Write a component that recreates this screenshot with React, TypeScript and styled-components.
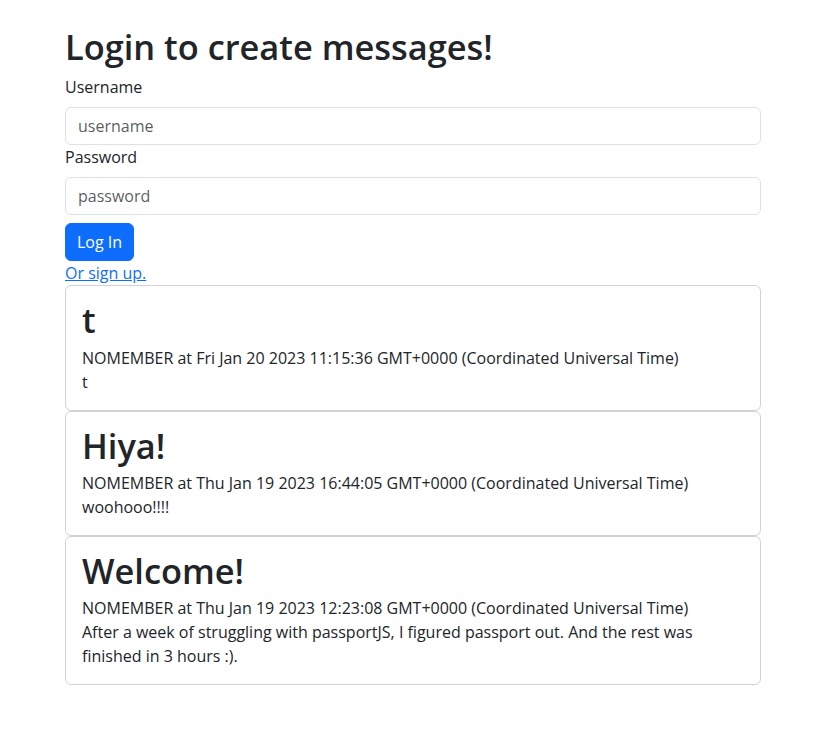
import React from "react";
import styled, { createGlobalStyle } from "styled-components";

const GlobalStyle = createGlobalStyle`
  *, *::before, *::after { box-sizing: border-box; }
  body {
    margin: 0;
    background: #fff;
    color: #212529;
    font-family: "Open Sans", "Noto Sans", sans-serif;
    font-size: 16px;
    line-height: 1.5;
  }
`;

const Container = styled.main`
  width: 696px;
  margin: 0 auto;
  padding-top: 26px;
`;

const PageTitle = styled.h1`
  margin: 0 0 8px;
  font-size: 34.4px;
  font-weight: 600;
  line-height: 1.2;
`;

const Form = styled.form`
  display: flex;
  flex-direction: column;
  align-items: flex-start;
`;

const Label = styled.label`
  display: block;
  margin-bottom: 8px;
`;

const Input = styled.input`
  display: block;
  width: 100%;
  height: 38px;
  padding: 6px 12px;
  font: inherit;
  color: #212529;
  background: #fff;
  border: 1px solid #dee2e6;
  border-radius: 6px;
  &::placeholder { color: rgba(33, 37, 41, 0.75); }
`;

const Button = styled.button`
  margin-top: 8px;
  padding: 6px 11px;
  font: inherit;
  line-height: 1.5;
  color: #fff;
  background: #0d6efd;
  border: 1px solid #0d6efd;
  border-radius: 6px;
  cursor: pointer;
`;

const SignUp = styled.div`
  a { color: #0d6efd; text-decoration: underline; }
`;

const Card = styled.article`
  border: 1px solid rgba(0, 0, 0, 0.175);
  border-radius: 6px;
  padding: 16px;
`;

const CardTitle = styled.h1`
  margin: 0 0 8.28px;
  font-size: 34.4px;
  font-weight: 600;
  line-height: 35px;
`;

const Line = styled.div``;

const messages = [
  { title: "t", date: "Fri Jan 20 2023 11:15:36", body: "t" },
  { title: "Hiya!", date: "Thu Jan 19 2023 16:44:05", body: "woohooo!!!!" },
  {
    title: "Welcome!",
    date: "Thu Jan 19 2023 12:23:08",
    body: "After a week of struggling with passportJS, I figured passport out. And the rest was finished in 3 hours :).",
  },
];

export default function App() {
  return (
    <>
      <GlobalStyle />
      <Container>
        <PageTitle>Login to create messages!</PageTitle>
        <Form onSubmit={(e) => e.preventDefault()}>
          <Label htmlFor="username">Username</Label>
          <Input id="username" placeholder="username" />
          <Label htmlFor="password">Password</Label>
          <Input id="password" type="password" placeholder="password" />
          <Button type="submit">Log In</Button>
        </Form>
        <SignUp>
          <a href="#">Or sign up.</a>
        </SignUp>
        {messages.map((m) => (
          <Card key={m.title}>
            <CardTitle>{m.title}</CardTitle>
            <Line>NOMEMBER at {m.date} GMT+0000 (Coordinated Universal Time)</Line>
            <Line>{m.body}</Line>
          </Card>
        ))}
      </Container>
    </>
  );
}
